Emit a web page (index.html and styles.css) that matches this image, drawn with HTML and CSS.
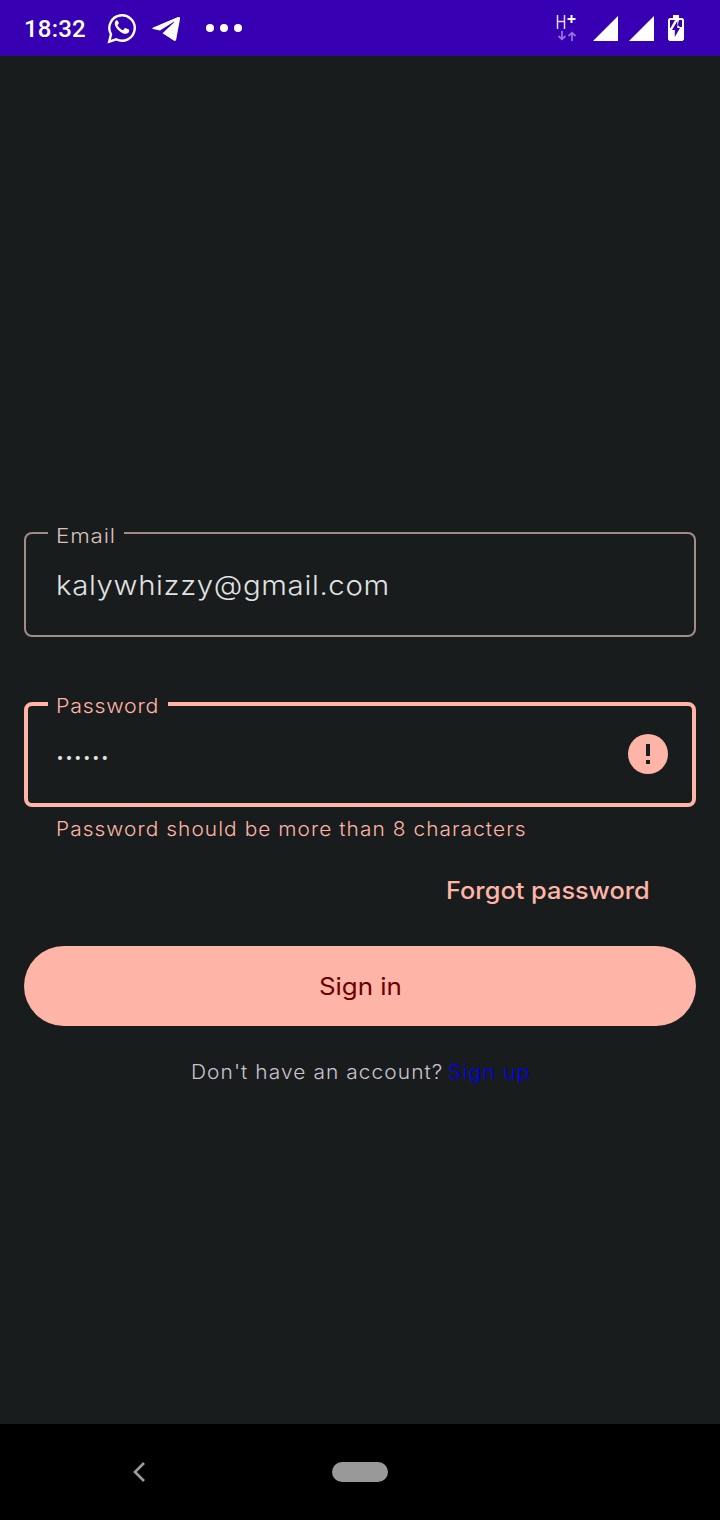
FILE: index.html
```html
<!DOCTYPE html>
<html lang="en">
<head>
<meta charset="utf-8">
<title>Sign in</title>
<link rel="stylesheet" href="styles.css">
</head>
<body>
<header class="status">
  <span class="clock">18:32</span>
  <svg class="whatsapp" width="30" height="32" viewBox="0 0 30 32"><path d="M2.200 29.600 4 22.300A12.700 12.700 0 1 1 9.200 27.300Z" fill="none" stroke="#fff" stroke-width="2.400"/><path d="M10.300 8.300c-.7-.3-1.200 0-1.700.6-3 3.600 2.700 10.200 7.200 12.300 3.300 1.500 6.300.3 6.400-2.700 0-.5-.2-.7-.6-.9l-3-1.500c-.5-.2-.8-.1-1.100.3l-1.200 1.500c-.3.300-.6.300-1 .1-2.100-1-3.700-2.500-4.700-4.400-.2-.4-.1-.6.2-.9l.9-1.100c.2-.3.2-.5.1-.8Z" fill="#fff"/></svg>
  <svg class="telegram" width="30" height="26" viewBox="0 0 30 26"><path d="M1.200 11.500 26 1.100c1.400-.5 2.400.2 2 2L24.200 23.500c-.3 1.400-1.300 1.800-2.500 1L10.500 17.200 22.200 6.300c.6-.6 0-.8-.8-.3L8 14.400 1 13c-1-.3-.9-1 .2-1.500Z" fill="#fff"/></svg>
  <svg class="more" width="38" height="8" viewBox="0 0 38 8" fill="#fff"><circle cx="5" cy="4" r="4"/><circle cx="19" cy="4" r="4"/><circle cx="33" cy="4" r="4"/></svg>
  <svg class="network" width="22" height="28" viewBox="0 0 22 28" fill="none"><path d="M2.500 1v14M9.500 1v14M2 7.500h8" stroke="#fff" stroke-opacity=".85" stroke-width="1.500"/><path d="M16.500 1v8M12.500 5h8" stroke="#fff" stroke-width="2"/><path d="M7 17v8M3.500 22 7 25.300 10.500 22M17 27v-8M13.500 22l3.500-3.300 3.500 3.300" stroke="#9471d6" stroke-width="1.800"/></svg>
  <svg class="signal" width="25" height="25" viewBox="0 0 25 25"><path d="M0 25 25 0v25Z" fill="#fff"/></svg>
  <svg class="signal" width="25" height="25" viewBox="0 0 25 25"><path d="M0 25 25 0v25Z" fill="#fff"/></svg>
  <svg class="battery" width="16" height="26" viewBox="0 0 16 26"><path d="M5 0h6v3h3.500L16 4.500v20L14.500 26h-13L0 24.500v-20L1.500 3H5Z" fill="#fff"/><path d="M2 5h5L2.500 13H2ZM11 5h3v7h-2.500l-.5-1.200H9.500ZM9.300 6v7H12L6.800 22v-7H4Z" fill="#3700b3"/></svg>
</header>
<main class="screen">
  <fieldset class="field email">
    <legend><span>Email</span></legend>
    <div class="value"><span>kalywhizzy@gmail.com</span></div>
  </fieldset>
  <fieldset class="field password">
    <legend><span>Password</span></legend>
    <div class="dots">••••••</div>
    <svg width="40" height="40" viewBox="0 0 40 40"><circle cx="20" cy="20" r="20" fill="#ffb4a8"/><path d="M18 10h4v12h-4ZM18 26h4v4h-4Z" fill="#191c1c"/></svg>
  </fieldset>
  <p class="error"><span>Password should be more than 8 characters</span></p>
  <div class="forgot"><span>Forgot password</span></div>
  <button class="submit" type="button"><span>Sign in</span></button>
  <p class="signup"><span class="question">Don't have an account?</span><span class="link">Sign up</span></p>
</main>
<nav class="navbar">
  <svg width="14" height="22" viewBox="0 0 14 22"><path d="M12 2 3 11l9 9" fill="none" stroke="#999" stroke-width="2.700"/></svg>
  <div class="home"></div>
</nav>
</body>
</html>
```
FILE: styles.css
```css
* { box-sizing: border-box; }
body {
  margin: 0;
  width: 720px;
  height: 1520px;
  display: flex;
  flex-direction: column;
  overflow: hidden;
  background: #191c1c;
  font-family: Inter, "Liberation Sans", sans-serif;
  font-weight: 300;
}
svg { display: block; flex: none; }
p { margin: 0; }
span { white-space: nowrap; }

.status {
  height: 56px;
  flex: none;
  display: flex;
  align-items: flex-start;
  padding-left: 24px;
  background: #3700b3;
  border-bottom: 1px solid #2b0d80;
}
.clock {
  width: 83px;
  padding-top: 13px;
  color: #fff;
  font: 500 24px/32px Roboto, sans-serif;
  letter-spacing: .2px;
}
.whatsapp { margin-top: 11.500px; }
.telegram { margin: 16px 0 0 15px; }
.more { margin: 24px 0 0 23px; }
.network { margin: 14px 0 0 312px; }
.signal { margin: 16px 0 0 15.500px; }
.signal + .signal { margin-left: 11px; }
.battery { margin: 15px 0 0 14.500px; }

.screen {
  flex: 1;
  display: flex;
  flex-direction: column;
  padding: 465px 24px 0;
}

/* Letterforms are widened from the left edge of each line */
.screen span {
  display: inline-block;
  transform-origin: 0 50%;
}
.field {
  min-width: 0;
  margin: 0;
  padding: 0;
  border-radius: 8px;
  display: flex;
  align-items: flex-start;
}
.field legend {
  height: 24px;
  padding: 3px 0 0 8px;
  font-size: 19.500px;
  line-height: 24px;
}
.email { height: 116px; border: 2px solid #a08c89; }
.email legend { width: 76px; margin-left: 22px; color: #d8c2be; letter-spacing: .7px; }
.email legend span { transform: scaleX(1.150); }
.value {
  padding: 24px 0 0 30px;
  color: #e0e3e3;
  font-size: 27px;
  line-height: 34px;
  letter-spacing: .6px;
}
.value span { transform: scaleX(1.088); }
.password {
  height: 115px;
  margin-top: 55px;
  border: 4px solid #ffb4a8;
  color: #ffb4a8;
}
.password legend { width: 120px; margin-left: 20px; padding-top: 2px; letter-spacing: .7px; }
.password legend span { transform: scaleX(1.096); }
.dots {
  flex: 1;
  padding: 31.500px 0 0 28.500px;
  color: #e0e3e3;
  font-size: 12.500px;
  font-weight: 400;
  line-height: 20px;
  letter-spacing: 1.900px;
}
.password svg { margin: 18px 24px 0 0; }
.error {
  height: 44px;
  padding: 10px 0 0 32px;
  color: #ffb4a8;
  font-size: 19.500px;
  line-height: 24px;
  letter-spacing: 1px;
}
.error span { transform: scaleX(1.069); }
.forgot {
  height: 95px;
  padding: 24px 0 0 422px;
  color: #ffb4a8;
  font-size: 24px;
  font-weight: 500;
  line-height: 32px;
}
.forgot span { transform: scaleX(1.057); }
.submit {
  height: 80px;
  flex: none;
  padding: 2px 0 0;
  border: 0;
  border-radius: 40px;
  background: #ffb4a8;
  color: #690000;
  font: 400 24px/32px Inter, "Liberation Sans", sans-serif;
}
.submit span { transform: scaleX(1.080); transform-origin: 50% 50%; }
.signup {
  display: flex;
  padding: 34px 0 0 167px;
  color: #cac4d0;
  font-size: 19.500px;
  line-height: 24px;
  letter-spacing: 1px;
}
.question { width: 257px; transform: scaleX(1.072); }
.link { color: #0000ee; transform: scaleX(1.090); }

.navbar {
  height: 96px;
  flex: none;
  display: flex;
  align-items: center;
  padding-left: 131.500px;
  background: #000;
}
.home {
  width: 56px;
  height: 20px;
  margin-left: 186.500px;
  border-radius: 10px;
  background: #999;
}
```
